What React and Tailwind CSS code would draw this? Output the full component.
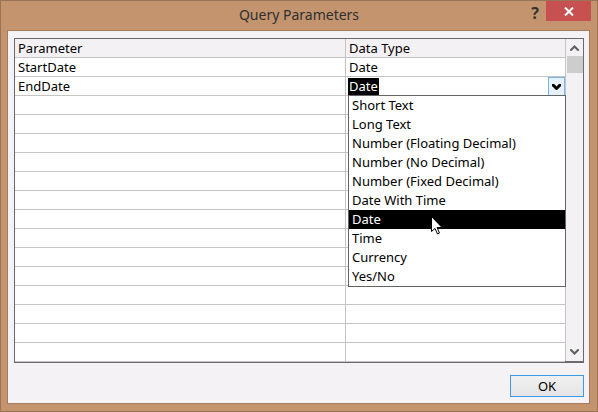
import React from 'react';

const font = { fontFamily: '"Noto Sans", "Segoe UI", sans-serif' };

const types = [
    'Short Text',
    'Long Text',
    'Number (Floating Decimal)',
    'Number (No Decimal)',
    'Number (Fixed Decimal)',
    'Date With Time',
    'Date',
    'Time',
    'Currency',
    'Yes/No',
];

const Chevron = ({ up, color = '#000', w = 3 }) => (
    <svg width="9" height="6" viewBox="0 0 9 6">
        <path
            d={up ? 'M1 5 L4.5 1.5 L8 5' : 'M1 1 L4.5 4.5 L8 1'}
            fill="none"
            stroke={color}
            strokeWidth={w}
            strokeLinecap="square"
        />
    </svg>
);

const Cursor = () => (
    <svg width="12" height="19" viewBox="0 0 12 19" className="absolute left-[82px] top-[6px]">
        <path
            d="M0.5 0.5 L0.5 15.5 L4 12.5 L6.5 18 L8.5 17 L6 11.5 L11 11.5 Z"
            fill="#fff"
            stroke="#000"
            strokeWidth="1"
            strokeLinejoin="miter"
        />
    </svg>
);

const App = () => {
    const rows = [
        { name: 'StartDate', type: 'Date' },
        { name: 'EndDate', type: 'Date', active: true },
    ];
    const empty = Array.from({ length: 14 });

    return (
        <div
            className="w-[598px] h-[412px] bg-[#c4946f] border border-[#9a7456] flex flex-col"
            style={font}
        >
            {/* Title bar */}
            <div className="h-[29px] relative flex items-center justify-center shrink-0">
                <span className="text-[14px] text-[#2f2f2f] leading-none mt-[-1px]">Query Parameters</span>
                <div className="absolute right-[58px] top-[4px] text-[16px] font-bold text-[#333] leading-none">?</div>
                <div className="absolute right-[6px] top-0 w-[45px] h-[20px] bg-[#c75050] flex items-center justify-center">
                    <svg width="10" height="9" viewBox="0 0 10 9">
                        <path d="M1 0.5 L9 8.5 M9 0.5 L1 8.5" stroke="#fff" strokeWidth="2" />
                    </svg>
                </div>
            </div>

            {/* Client area */}
            <div className="flex-1 ml-[6px] mr-[7px] mb-[7px] border border-[#a37c5e] bg-[#f5f2f5] pl-[6px] pt-[7px] pr-[5px] pb-[6px] flex flex-col">
                <div className="relative h-[325px] border border-[#6a6a6a] border-b-2 flex text-[13px] text-black">
                    <div className="flex-1 flex flex-col">
                        <div className="h-[19px] shrink-0 flex border-b border-[#c4c4c4] bg-[#f4f1f4]">
                            <div className="w-[331px] border-r border-[#c4c4c4] pl-[3px] leading-[18px]">Parameter</div>
                            <div className="flex-1 pl-[3px] leading-[18px]">Data Type</div>
                        </div>
                        {rows.map((r) => (
                            <div key={r.name} className="h-[19px] shrink-0 flex border-b border-[#c4c4c4] bg-white">
                                <div className="w-[331px] border-r border-[#c4c4c4] pl-[3px] leading-[18px]">{r.name}</div>
                                <div className="flex-1 pl-[3px] leading-[18px] relative">
                                    {r.active ? (
                                        <>
                                            <span className="bg-black text-white inline-block h-[17px] leading-[17px] mt-[1px] ml-[-1px] pl-[1px] pr-[1px]">
                                                {r.type}
                                            </span>
                                            <div className="absolute right-0 top-0 w-[17px] h-[19px] bg-[#e5f1fb] border border-[#7eb4ea] flex items-center justify-center">
                                                <Chevron />
                                            </div>
                                        </>
                                    ) : (
                                        r.type
                                    )}
                                </div>
                            </div>
                        ))}
                        {empty.map((_, i) => (
                            <div key={i} className="h-[19px] shrink-0 flex border-b border-[#c4c4c4] bg-white">
                                <div className="w-[331px] border-r border-[#c4c4c4]" />
                                <div className="flex-1" />
                            </div>
                        ))}
                        <div className="flex-1 flex bg-white">
                            <div className="w-[331px] border-r border-[#c4c4c4]" />
                            <div className="flex-1" />
                        </div>
                    </div>

                    {/* Scrollbar */}
                    <div className="w-[18px] border-l border-[#c4c4c4] bg-[#f4f1f4] flex flex-col items-center">
                        <div className="h-[17px] flex items-center justify-center">
                            <Chevron up color="#606060" w={2} />
                        </div>
                        <div className="w-[16px] h-[17px] bg-[#cdcdcd]" />
                        <div className="flex-1" />
                        <div className="h-[17px] flex items-center justify-center mb-[1px]">
                            <Chevron color="#606060" w={2} />
                        </div>
                    </div>

                    {/* Data type dropdown list */}
                    <div className="absolute left-[333px] top-[56px] w-[218px] border border-[#646464] bg-white">
                        {types.map((t) => (
                            <div
                                key={t}
                                className={
                                    'h-[19px] pl-[3px] leading-[19px] relative ' +
                                    (t === 'Date' ? 'bg-black text-white' : 'text-black')
                                }
                            >
                                {t}
                                {t === 'Date' && <Cursor />}
                            </div>
                        ))}
                    </div>
                </div>

                <div className="flex justify-end mt-[12px]">
                    <button className="w-[74px] h-[22px] border border-[#3c9ae8] bg-gradient-to-b from-[#f0f0f0] to-[#e5e5e5] text-[13px] text-black leading-none">
                        OK
                    </button>
                </div>
            </div>
        </div>
    );
};

export default App;
